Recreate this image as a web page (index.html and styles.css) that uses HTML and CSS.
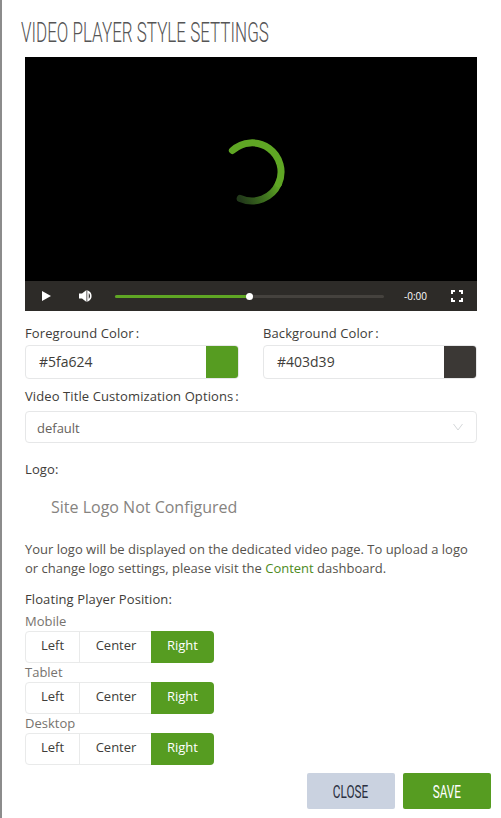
FILE: index.html
```html
<!DOCTYPE html>
<html lang="en">
<head>
<meta charset="utf-8">
<title>Video Player Style Settings</title>
<link rel="stylesheet" href="styles.css">
</head>
<body>
<main class="modal">
  <h1 class="title">VIDEO PLAYER STYLE SETTINGS</h1>
  <div class="content">
    <section class="player">
      <div class="stage">
        <svg class="spinner" width="70" height="70" viewBox="0 0 70 70" aria-hidden="true">
          <defs>
            <linearGradient id="fade" gradientUnits="userSpaceOnUse" x1="61.500" y1="46.700" x2="23.200" y2="61.500">
              <stop offset="0" stop-color="#5fa624"/>
              <stop offset="0.35" stop-color="#437a1f"/>
              <stop offset="1" stop-color="#22391a"/>
            </linearGradient>
          </defs>
          <path d="M61.500 46.700A29 29 0 0 1 23.200 61.500" fill="none" stroke="url(#fade)" stroke-width="7" stroke-linecap="round"/>
          <path d="M15.400 13.500A29 29 0 0 1 61.500 46.700" fill="none" stroke="#5fa624" stroke-width="7" stroke-linecap="round"/>
        </svg>
      </div>
      <div class="controls">
        <svg class="play" width="12" height="12" viewBox="0 0 12 12" aria-hidden="true"><path d="M2 1l9 5-9 5z" fill="#fff"/></svg>
        <svg class="volume" width="16" height="14" viewBox="0 0 16 14" aria-hidden="true"><path d="M1 4.500h3L8.500 1v12L4 9.500H1z" fill="#fff"/><path d="M10 2.500a5 5 0 0 1 0 9z" fill="none" stroke="#fff" stroke-width="1.500"/></svg>
        <div class="track"><div class="played"></div><div class="knob"></div></div>
        <span class="time">-0:00</span>
        <svg class="full" width="12" height="12" viewBox="0 0 12 12" aria-hidden="true"><path d="M1 4V1h3M8 1h3v3M11 8v3H8M4 11H1V8" fill="none" stroke="#fff" stroke-width="2"/></svg>
      </div>
    </section>

    <div class="colors">
      <div class="color-field">
        <label class="label">Foreground Color<span class="colon">:</span></label>
        <div class="color-input">
          <span class="color-value">#5fa624</span>
          <span class="swatch swatch-fg"></span>
        </div>
      </div>
      <div class="color-field">
        <label class="label">Background Color<span class="colon">:</span></label>
        <div class="color-input">
          <span class="color-value">#403d39</span>
          <span class="swatch swatch-bg"></span>
        </div>
      </div>
    </div>

    <label class="label label-title">Video Title Customization Options<span class="colon">:</span></label>
    <div class="select">
      <span>default</span>
      <svg width="12" height="8" viewBox="0 0 12 8" aria-hidden="true"><path d="M1.500 1l4.500 6 4.500-6" fill="none" stroke="#d5d8da" stroke-width="1"/></svg>
    </div>

    <div class="label label-logo">Logo:</div>
    <div class="no-logo">Site Logo Not Configured</div>
    <p class="help">Your logo will be displayed on the dedicated video page. To upload a logo or change logo settings, please visit the <a href="#">Content</a> dashboard.</p>

    <div class="label label-float">Floating Player Position:</div>
    <div class="device">Mobile</div>
    <div class="segments"><span class="seg seg-left">Left</span><span class="seg seg-center">Center</span><span class="seg seg-right">Right</span></div>
    <div class="device">Tablet</div>
    <div class="segments"><span class="seg seg-left">Left</span><span class="seg seg-center">Center</span><span class="seg seg-right">Right</span></div>
    <div class="device">Desktop</div>
    <div class="segments"><span class="seg seg-left">Left</span><span class="seg seg-center">Center</span><span class="seg seg-right">Right</span></div>
  </div>
  <div class="actions">
    <button class="btn btn-close"><span class="btn-text">CLOSE</span></button>
    <button class="btn btn-save"><span class="btn-text">SAVE</span></button>
  </div>
</main>
</body>
</html>
```
FILE: styles.css
```css
* { box-sizing: border-box; }
html, body { margin: 0; padding: 0; height: 100%; }
body {
  width: 501px;
  height: 818px;
  overflow: hidden;
  background: #fff;
  font-family: "Open Sans", sans-serif;
  color: #403d39;
}
.modal {
  height: 818px;
  border-left: 2px solid #8c8c8c;
  padding: 0 24px 0 23px;
  display: flex;
  flex-direction: column;
}
.title {
  margin: 18px 0 0 -4px;
  height: 39px;
  font-family: "Roboto", sans-serif;
  font-weight: 300;
  font-size: 27px;
  line-height: 30px;
  color: #555;
  white-space: nowrap;
  transform: scaleX(0.63);
  transform-origin: left center;
}
.content { display: flex; flex-direction: column; }
.player { width: 452px; height: 254px; display: flex; flex-direction: column; }
.stage {
  height: 224px;
  background: #000;
  padding: 80px 0 0 192px;
}
.spinner { display: block; }
.controls {
  height: 30px;
  background: #2d2b28;
  display: flex;
  align-items: center;
  color: #fff;
}
.play { margin-left: 15px; }
.volume { margin-left: 26px; }
.track {
  position: relative;
  margin-left: 21px;
  width: 269px;
  height: 3px;
  background: #45423e;
  border-radius: 2px;
}
.played { width: 134px; height: 3px; background: #5fa624; border-radius: 2px; }
.knob {
  position: absolute;
  left: 131px;
  top: -2px;
  width: 7px;
  height: 7px;
  border-radius: 50%;
  background: #fff;
}
.time { margin-left: 20px; font-size: 10px; width: 24px; white-space: nowrap; }
.full { margin-left: 23px; }
.colors { display: flex; gap: 24px; margin-top: 12px; }
.color-field { width: 214px; }
.label {
  display: block;
  font-size: 13px;
  line-height: 20px;
  letter-spacing: 0.1px;
  color: #403d39;
}
.colon { margin-left: 2px; }
.color-input {
  display: flex;
  height: 34px;
  margin-top: 2px;
  border: 1px solid #e6e7e8;
  border-radius: 4px;
  overflow: hidden;
}
.color-value {
  flex: 1;
  padding-left: 13px;
  font-size: 14px;
  line-height: 32px;
  color: #403d39;
}
.swatch { width: 33px; margin: -1px; }
.swatch-fg { background: #569c21; }
.swatch-bg { background: #3b3835; }
.label-title { margin-top: 7px; }
.select {
  display: flex;
  align-items: center;
  justify-content: space-between;
  width: 452px;
  height: 32px;
  margin-top: 5px;
  padding: 2px 12px 0 11px;
  border: 1px solid #e6e7e8;
  border-radius: 4px;
  font-size: 13px;
  color: #66625c;
}
.select svg { margin-top: -2px; }
.label-logo { margin-top: 16px; }
.no-logo {
  margin-top: 17px;
  padding-left: 26px;
  font-size: 16px;
  line-height: 22px;
  color: #86837f;
}
.help {
  margin: 22px 0 0;
  font-size: 13px;
  line-height: 19px;
  color: #55524d;
}
.help a { color: #4d8a1d; text-decoration: none; }
.label-float { margin-top: 11px; }
.device {
  font-size: 13px;
  line-height: 19px;
  color: #77736e;
}
.label-float + .device { margin-top: 3px; }
.segments {
  display: flex;
  width: 189px;
  height: 32px;
  border: 1px solid #e9eaea;
  border-radius: 4px;
  font-size: 13px;
  line-height: 27px;
}
.seg { text-align: center; }
.seg-left { width: 54px; border-right: 1px solid #e9eaea; }
.seg-center { width: 72px; }
.seg-right {
  flex: 1;
  margin: -1px;
  line-height: 29px;
  background: #569c21;
  color: #fff;
  border-radius: 0 4px 4px 0;
}
.actions {
  display: flex;
  justify-content: flex-end;
  gap: 8px;
  margin: 8px -14px 0 0;
}
.btn {
  width: 88px;
  height: 36px;
  border: 0;
  border-radius: 2px;
  padding: 0;
  font-family: "Roboto", sans-serif;
  font-size: 19px;
}
.btn-text { display: inline-block; transform: scaleX(0.62); }
.btn-close { background: #cad2e0; color: #2b3040; }
.btn-save { background: #569c21; color: #fff; }
```
